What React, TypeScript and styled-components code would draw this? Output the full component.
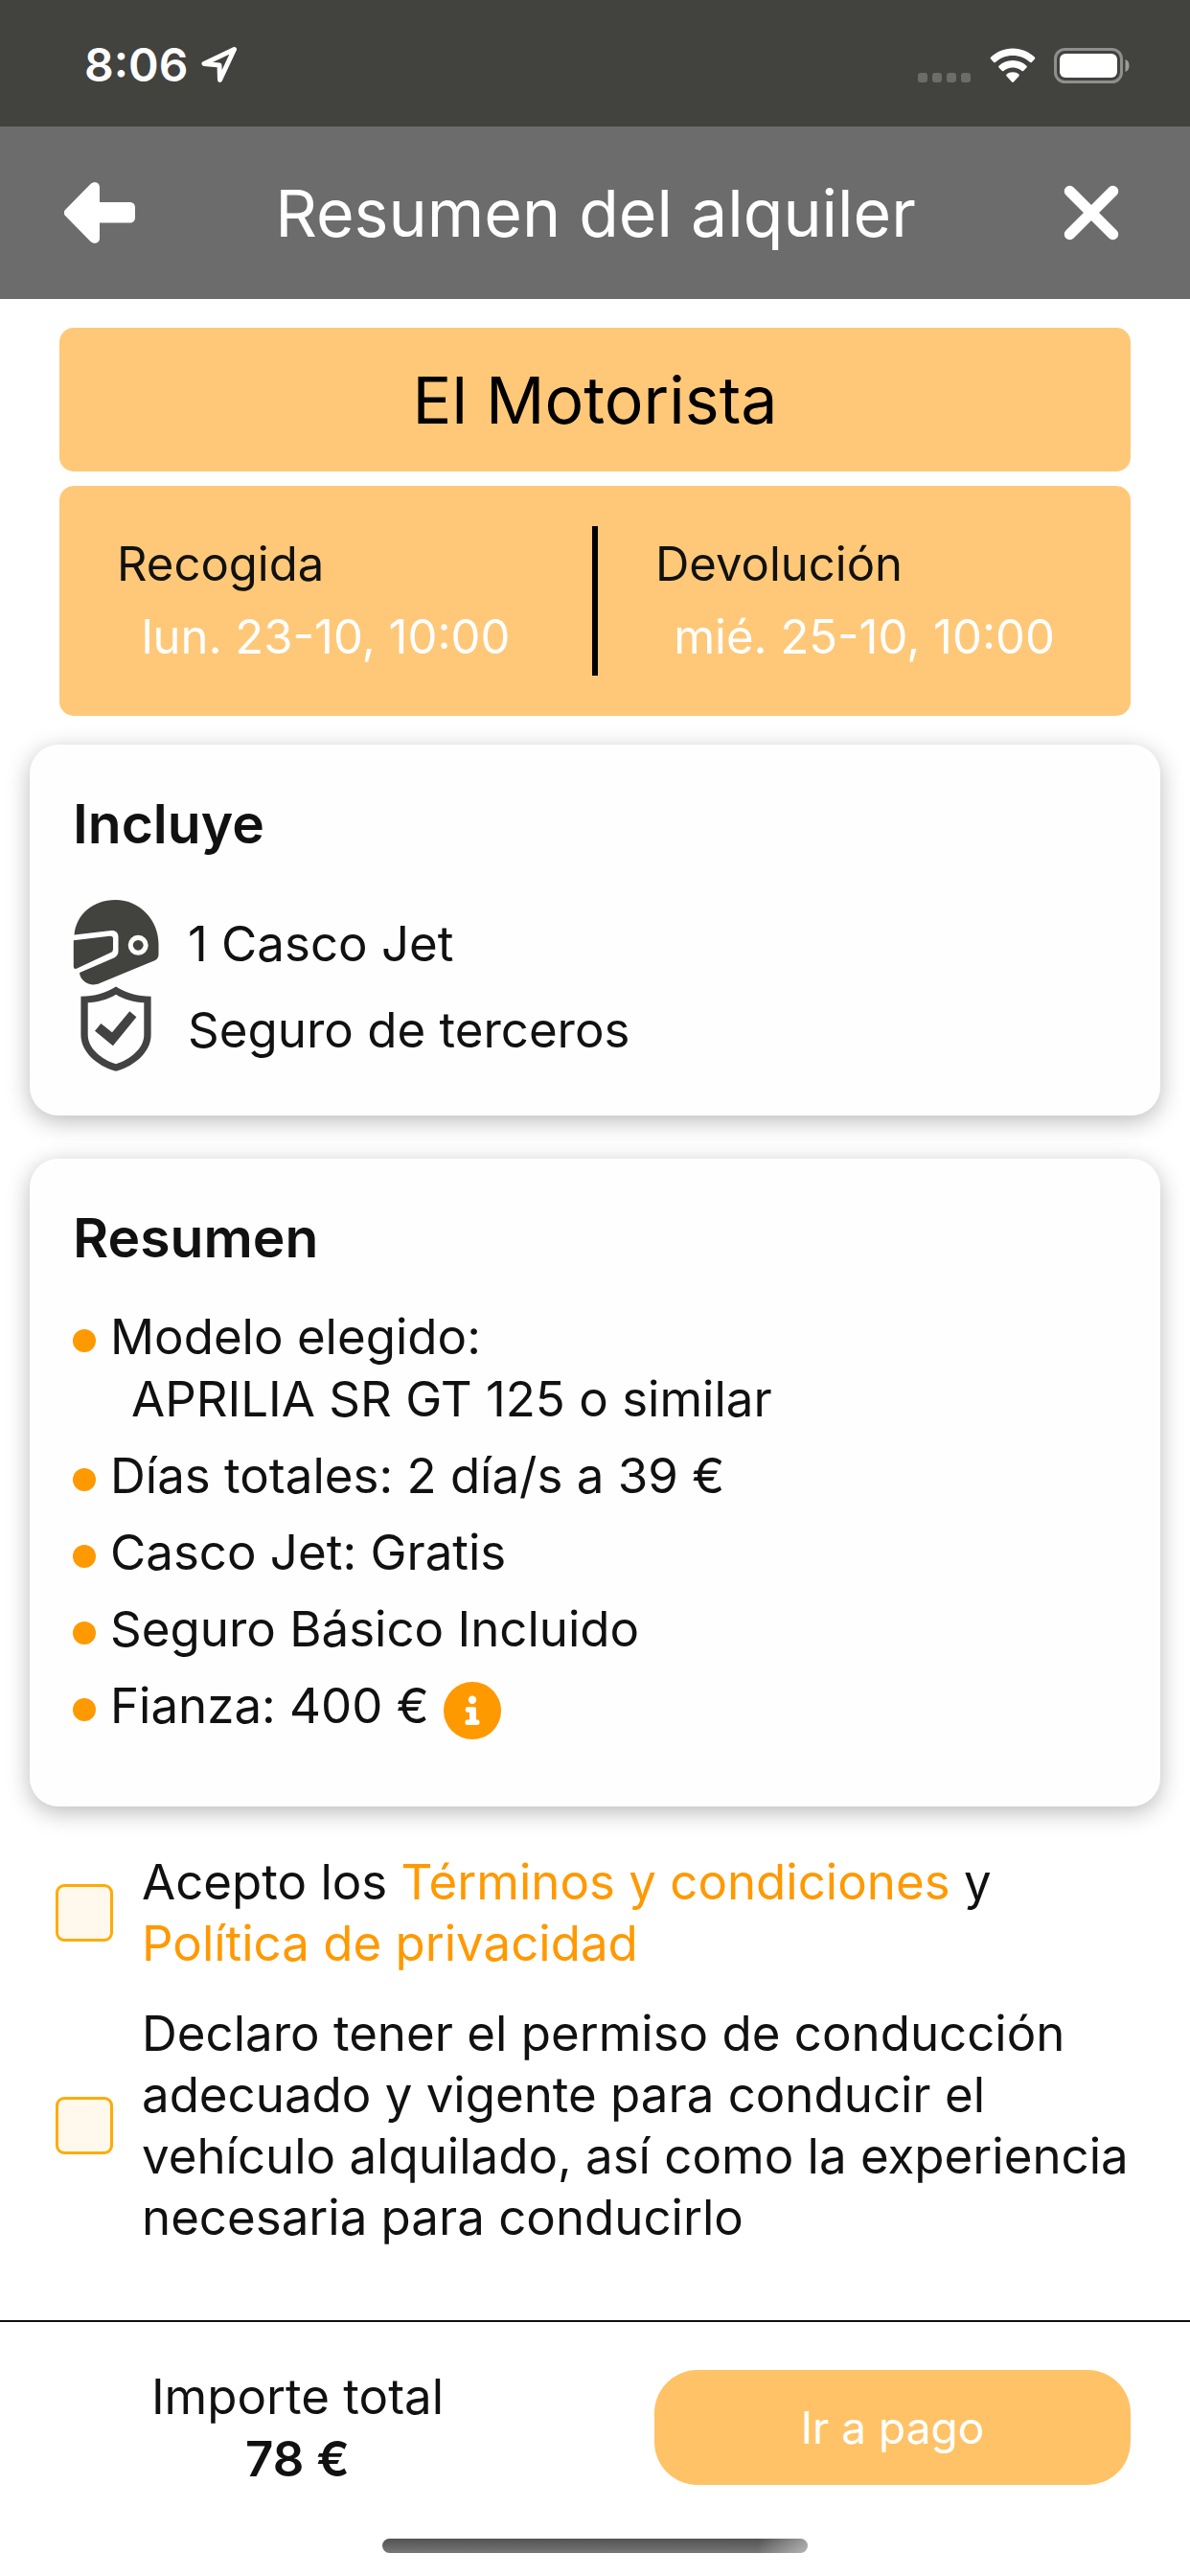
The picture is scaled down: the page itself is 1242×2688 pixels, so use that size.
import React, { useState } from 'react';
import styled, { createGlobalStyle } from 'styled-components';

const color = {
  ink: '#111111',
  accent: '#ff9900',
  soft: '#ffc878',
  button: '#ffc266',
  status: '#42423f',
  header: '#6c6c6c',
};

const GlobalStyle = createGlobalStyle`
  *, *::before, *::after { box-sizing: border-box; }
  body {
    margin: 0;
    background: #ffffff;
    color: ${color.ink};
    font-family: Inter, Roboto, "Liberation Sans", sans-serif;
  }
  h1, h2, p, ul, dl, dd { margin: 0; padding: 0; }
`;

const Screen = styled.div`
  display: flex;
  flex-direction: column;
  min-height: 100vh;
`;

const StatusBar = styled.div`
  display: flex;
  align-items: center;
  justify-content: space-between;
  height: 132px;
  padding: 4px 63px 0 88px;
  background: ${color.status};
  color: #ffffff;
`;

const StatusGroup = styled.div<{ $gap: number }>`
  display: flex;
  align-items: center;
  gap: ${(p) => p.$gap}px;
`;

const Clock = styled.span`
  font-size: 48px;
  line-height: 60px;
  font-weight: 600;
`;

const Header = styled.header`
  display: flex;
  align-items: center;
  justify-content: space-between;
  height: 180px;
  padding: 0 63px 0 64px;
  background: ${color.header};
  color: #ffffff;
`;

const IconButton = styled.button`
  display: flex;
  align-items: center;
  justify-content: center;
  width: 80px;
  height: 80px;
  padding: 0;
  border: 0;
  background: none;
  color: inherit;
`;

const Title = styled.h1`
  font-size: 68px;
  line-height: 90px;
  font-weight: 400;
`;

const Main = styled.main`
  display: flex;
  flex-direction: column;
  padding: 30px 31px 0;
`;

const Banners = styled.section`
  display: flex;
  flex-direction: column;
  gap: 15px;
  margin: 0 31px 30px;
`;

const Banner = styled.div`
  display: flex;
  align-items: center;
  justify-content: center;
  height: 150px;
  border-radius: 15px;
  background: ${color.soft};
`;

const ShopName = styled.h2`
  color: #000000;
  font-size: 68px;
  line-height: 90px;
  font-weight: 400;
`;

const Dates = styled.dl`
  display: grid;
  grid-template-columns: 1fr 6px 1fr;
  align-items: center;
  height: 240px;
  border-radius: 15px;
  background: ${color.soft};
`;

const DateCell = styled.div`
  display: flex;
  flex-direction: column;
  gap: 12px;
  font-size: 49px;
  line-height: 64px;
`;

const DateLabel = styled.dt`
  padding-left: 60px;
`;

const DateValue = styled.dd`
  color: #ffffff;
  text-align: center;
`;

const Divider = styled.div`
  height: 156px;
  background: #000000;
`;

const Card = styled.section`
  margin-bottom: 45px;
  padding: 45px;
  border-radius: 30px;
  background: #fefefe;
  box-shadow: 0 6px 24px rgba(0, 0, 0, 0.27);
`;

const CardTitle = styled.h2`
  font-size: 57px;
  line-height: 75px;
  font-weight: 600;
`;

const IncludeList = styled.ul`
  margin-top: 42px;
  list-style: none;
`;

const IncludeItem = styled.li`
  display: flex;
  align-items: center;
  gap: 30px;
  height: 90px;
  font-size: 51px;
  line-height: 65px;
`;

const SummaryList = styled.ul`
  display: flex;
  flex-direction: column;
  gap: 15px;
  margin: 33px 0 25px;
  list-style: none;
`;

const SummaryItem = styled.li`
  display: flex;
  gap: 15px;
  font-size: 51px;
  line-height: 65px;

  &::before {
    content: '';
    flex: none;
    width: 24px;
    height: 24px;
    margin-top: 25px;
    border-radius: 50%;
    background: ${color.accent};
  }
`;

const Model = styled.span`
  display: block;
  padding-left: 22px;
`;

const InfoButton = styled(IconButton)`
  width: 60px;
  height: 60px;
  margin-top: 8px;
`;

const Consents = styled.section`
  display: flex;
  flex-direction: column;
  gap: 30px;
  margin: 2px 0 60px;
  padding: 0 12px 0 27px;
`;

const Consent = styled.div`
  display: flex;
  align-items: center;
  gap: 30px;
`;

const Checkbox = styled.input`
  flex: none;
  appearance: none;
  width: 60px;
  height: 60px;
  margin: 0;
  border: 3px solid #ffab00;
  border-radius: 9px;
  background: #fff8ec;

  &:checked {
    background: ${color.accent};
  }
`;

const ConsentLabel = styled.label`
  font-size: 51px;
  line-height: 64px;
`;

const Link = styled.a`
  color: ${color.accent};
  text-decoration: none;
`;

const Footer = styled.footer`
  display: grid;
  grid-template-columns: 1fr 1fr;
  margin-top: auto;
  padding: 45px 0 51px;
  border-top: 2px solid ${color.ink};
`;

const Total = styled.div`
  font-size: 51px;
  line-height: 65px;
  text-align: center;
`;

const Amount = styled.strong`
  display: block;
  font-weight: 600;
`;

const PayButton = styled.button`
  align-self: center;
  height: 120px;
  margin: 0 62px;
  border: 0;
  border-radius: 45px;
  background: ${color.button};
  color: #ffffff;
  font-family: inherit;
  font-size: 46px;
`;

const HomeIndicator = styled.div`
  align-self: center;
  width: 444px;
  height: 15px;
  margin-bottom: 24px;
  border-radius: 8px;
  background:
    linear-gradient(100deg, transparent 88%, rgba(255, 255, 255, 0.45)),
    linear-gradient(#525252, #777777);
`;

const LocationIcon = () => (
  <svg width="38" height="38" viewBox="0 0 38 38" fill="none" stroke="currentColor" strokeWidth="5" strokeLinejoin="round" aria-hidden="true">
    <path d="M34.5 2.5 3 17.5 19 19 19.500 34.500Z" />
  </svg>
);

const SignalIcon = () => (
  <svg width="56" height="37" viewBox="0 0 56 37" fill="#6c6c69" aria-hidden="true">
    {[0, 15, 30, 45].map((x) => (
      <rect key={x} x={x} y="26" width="10" height="10" rx="3" />
    ))}
  </svg>
);

const WifiIcon = () => (
  <svg width="48" height="37" viewBox="0 0 48 37" fill="currentColor" aria-hidden="true">
    <path d="M24 0.500C33 0.500 41 4 47 9.800Q47.800 10.700 47 11.600L43.800 14.900Q43 15.600 42.200 14.900C37 10.300 31 7.900 24 7.900S11 10.300 5.800 14.900Q5 15.600 4.200 14.900L1 11.600Q0.200 10.700 1 9.800C7 4 15 0.500 24 0.500Z" />
    <path d="M24 13C29.700 13 34.700 15.100 38.500 18.700Q39.400 19.600 38.500 20.500L35.100 23.900Q34.300 24.600 33.500 23.900C30.900 21.700 27.700 20.400 24 20.400S17.100 21.700 14.500 23.900Q13.700 24.600 12.900 23.900L9.500 20.500Q8.600 19.600 9.500 18.700C13.300 15.100 18.300 13 24 13Z" />
    <path d="M24 25.300C26.500 25.300 28.700 26.200 30.400 27.500Q31.300 28.400 30.400 29.400L24.900 35.600Q24 36.400 23.100 35.600L17.600 29.400Q16.700 28.400 17.600 27.500C19.300 26.200 21.500 25.300 24 25.300Z" />
  </svg>
);

const BatteryIcon = () => (
  <svg width="79" height="37" viewBox="0 0 79 37" aria-hidden="true">
    <rect x="1.500" y="1.500" width="69" height="34" rx="10" fill="none" stroke="#8f8f8d" strokeWidth="3" />
    <rect x="6" y="6" width="60" height="25" rx="6" fill="#ffffff" />
    <path d="M74.500 12C77.500 13.200 78.500 15.500 78.500 18.500S77.500 23.800 74.500 25Z" fill="#9a9a98" />
  </svg>
);

const BackIcon = () => (
  <svg width="74" height="64" viewBox="0 0 74 64" fill="currentColor" aria-hidden="true">
    <path d="M1 29 27.500 2C31 -1.300 37 0 37 5.500V21H68C72 21 74 23 74 27V36.500C74 40.500 72 42.500 68 42.500H37V58.500C37 64 31 65.300 27.500 62L1 35C-0.600 33.200 -0.600 30.800 1 29Z" />
  </svg>
);

const CloseIcon = () => (
  <svg width="58" height="58" viewBox="0 0 58 58" stroke="currentColor" strokeWidth="11.500" strokeLinecap="round" aria-hidden="true">
    <path d="M6.500 6.500 51.500 51.500M51.500 6.500 6.500 51.500" />
  </svg>
);

const HelmetIcon = () => (
  <svg width="90" height="90" viewBox="0 0 90 90" fill={color.status} aria-hidden="true">
    <path
      fillRule="evenodd"
      d="M1.500 36.500C3.500 15 21 0 44.500 0C70 0 89.500 21 89.500 46V57C89.500 60 88 62 85.500 63.200L28 87C18 91.500 7.500 84.500 7 76L43 60.500C46 59 47.500 56.500 47.500 53.500V38.500C47.500 34 44.500 31.600 40 32ZM68.200 36.800A10.500 10.500 0 1 0 68.200 57.800A10.500 10.500 0 1 0 68.200 36.800Z"
    />
    <circle cx="68.200" cy="47.300" r="5.400" />
    <path d="M0.800 42.300 38.500 37.700Q42 37.300 42 40.500V51.500Q42 54 39.500 55.100L4.400 71.500Q0.800 73 0.800 69Z" />
  </svg>
);

const ShieldIcon = () => (
  <svg width="90" height="90" viewBox="0 0 90 90" fill="#424242" aria-hidden="true">
    <path
      fillRule="evenodd"
      d="M45 0.500C55 7 67 10.700 81.600 10.700V51C81.600 69 64 83 47.500 88Q45 89 42.500 88C26 83 8.400 69 8.400 51V10.700C23 10.700 35 7 45 0.500ZM45 8.800C36 14.200 26.500 16.800 15.700 17.300V51C15.700 65 30 76.500 45 81.300C60 76.500 74.300 65 74.300 51V17.300C63.500 16.800 54 14.200 45 8.800Z"
    />
    <path d="M29.400 39 41 48.300 59.300 26.300 66.400 32.300 41.900 62.300 23 46.700Z" />
  </svg>
);

const InfoIcon = () => (
  <svg width="60" height="60" viewBox="0 0 60 60" fill="#ffffff" aria-hidden="true">
    <circle cx="30" cy="30" r="30" fill={color.accent} />
    <circle cx="30" cy="18.700" r="4.200" />
    <path d="M25 26.300H32Q34 26.300 34 28.300V39.500H35.200Q37.500 39.500 37.500 41.500V43Q37.500 45 35.200 45H24.800Q22.500 45 22.500 43V41.500Q22.500 39.500 24.800 39.500H27V31.800H25Q22.800 31.800 22.800 29.800V28.300Q22.800 26.300 25 26.300Z" />
  </svg>
);

export default function App() {
  const [terms, setTerms] = useState(false);
  const [licence, setLicence] = useState(false);

  return (
    <Screen>
      <GlobalStyle />
      <StatusBar>
        <StatusGroup $gap={14}>
          <Clock>8:06</Clock>
          <LocationIcon />
        </StatusGroup>
        <StatusGroup $gap={19}>
          <SignalIcon />
          <WifiIcon />
          <BatteryIcon />
        </StatusGroup>
      </StatusBar>

      <Header>
        <IconButton type="button" aria-label="Volver">
          <BackIcon />
        </IconButton>
        <Title>Resumen del alquiler</Title>
        <IconButton type="button" aria-label="Cerrar">
          <CloseIcon />
        </IconButton>
      </Header>

      <Main>
        <Banners>
          <Banner>
            <ShopName>El Motorista</ShopName>
          </Banner>
          <Dates>
            <DateCell>
              <DateLabel>Recogida</DateLabel>
              <DateValue>lun. 23-10, 10:00</DateValue>
            </DateCell>
            <Divider />
            <DateCell>
              <DateLabel>Devolución</DateLabel>
              <DateValue>mié. 25-10, 10:00</DateValue>
            </DateCell>
          </Dates>
        </Banners>

        <Card>
          <CardTitle>Incluye</CardTitle>
          <IncludeList>
            <IncludeItem>
              <HelmetIcon />
              1 Casco Jet
            </IncludeItem>
            <IncludeItem>
              <ShieldIcon />
              Seguro de terceros
            </IncludeItem>
          </IncludeList>
        </Card>

        <Card>
          <CardTitle>Resumen</CardTitle>
          <SummaryList>
            <SummaryItem>
              <div>
                Modelo elegido:
                <Model>APRILIA SR GT 125 o similar</Model>
              </div>
            </SummaryItem>
            <SummaryItem>Días totales: 2 día/s a 39 €</SummaryItem>
            <SummaryItem>Casco Jet: Gratis</SummaryItem>
            <SummaryItem>Seguro Básico Incluido</SummaryItem>
            <SummaryItem>
              Fianza: 400 €
              <InfoButton type="button" aria-label="Información sobre la fianza">
                <InfoIcon />
              </InfoButton>
            </SummaryItem>
          </SummaryList>
        </Card>

        <Consents>
          <Consent>
            <Checkbox id="terms" type="checkbox" checked={terms} onChange={(e) => setTerms(e.target.checked)} />
            <ConsentLabel htmlFor="terms">
              Acepto los <Link href="#terminos">Términos y condiciones</Link> y{' '}
              <Link href="#privacidad">Política de privacidad</Link>
            </ConsentLabel>
          </Consent>
          <Consent>
            <Checkbox id="licence" type="checkbox" checked={licence} onChange={(e) => setLicence(e.target.checked)} />
            <ConsentLabel htmlFor="licence">
              Declaro tener el permiso de conducción adecuado y vigente para conducir el vehículo alquilado, así
              como la experiencia necesaria para conducirlo
            </ConsentLabel>
          </Consent>
        </Consents>
      </Main>

      <Footer>
        <Total>
          Importe total
          <Amount>78 €</Amount>
        </Total>
        <PayButton type="button">Ir a pago</PayButton>
      </Footer>
      <HomeIndicator />
    </Screen>
  );
}
